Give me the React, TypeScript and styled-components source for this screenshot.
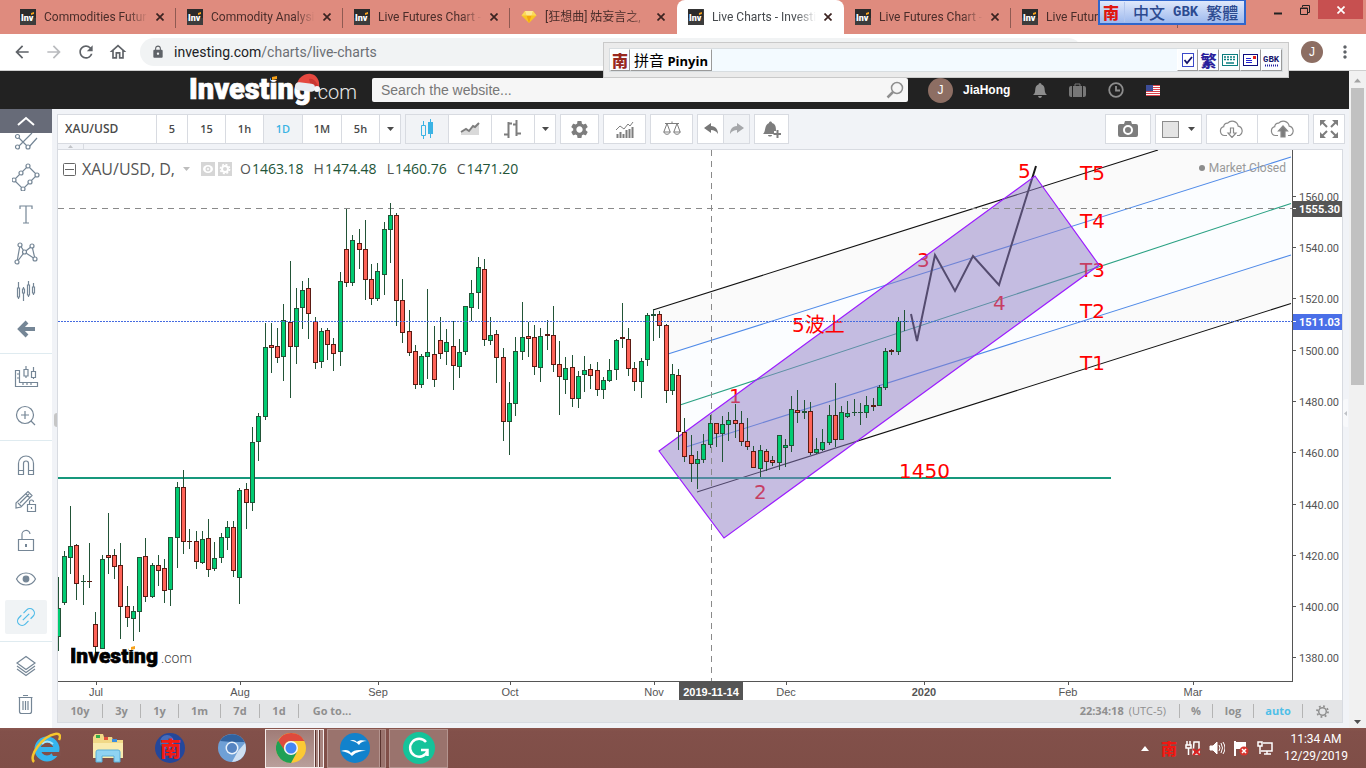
import React from "react";
import styled, { createGlobalStyle, css } from "styled-components";
import {
  MdArrowBack,
  MdArrowForward,
  MdRefresh,
  MdOutlineHome,
  MdLock,
  MdMoreVert,
  MdSettings,
} from "react-icons/md";

const UI = `"Open Sans", "Noto Sans CJK TC", sans-serif`;
const CHROME = `Roboto, "Noto Sans CJK TC", sans-serif`;
const ARIAL = `"Liberation Sans", "Noto Sans CJK TC", sans-serif`;
const CJK = `"Noto Sans CJK TC", "Noto Sans CJK SC", sans-serif`;
const LINE = "#d8dbe1";
const GREY = "#7d7d7d";
const SLATE = "#758696";

const Global = createGlobalStyle`
  * { box-sizing: border-box; }
  html, body { margin: 0; padding: 0; }
  body { font-family: ${ARIAL}; background: #f1f3f7; }
  button { font: inherit; color: inherit; border: 0; background: none; padding: 0; margin: 0; }
  input { font: inherit; color: inherit; border: 0; outline: 0; padding: 0; margin: 0; }
  svg { display: block; }
`;

const Screen = styled.div`
  min-height: 100vh;
  display: flex;
  flex-direction: column;
  position: relative;
  overflow: hidden;
`;

/* ---------- browser frame ---------- */

const TabStrip = styled.div`
  height: 34px;
  background: #df8b7e;
  display: flex;
  padding-left: 9px;
`;

const Tab = styled.div<{ $active?: boolean; $divided?: boolean }>`
  flex: 0 1 167px;
  min-width: 0;
  height: 34px;
  display: flex;
  align-items: center;
  gap: 4px;
  padding: 0 8px 0 11px;
  border-radius: 8px 8px 0 0;
  background: ${(p) => (p.$active ? "#fff" : "transparent")};
  color: ${(p) => (p.$active ? "#45494d" : "#4a2d2a")};
  ${(p) =>
    p.$divided &&
    css`
      background: linear-gradient(#8f5a52, #8f5a52) right 8px / 1px 20px no-repeat;
    `}
`;

const TabTitle = styled.span`
  flex: 1;
  margin-left: 4px;
  white-space: nowrap;
  font: 12px/16px ${CHROME};
  mask-image: linear-gradient(90deg, #000 80%, transparent);
`;

const TabClose = styled.button`
  width: 16px;
  height: 16px;
  display: grid;
  place-items: center;
`;

const WindowControls = styled.div`
  margin-left: auto;
  display: flex;
  padding-right: 3px;
`;

const WindowButton = styled.button<{ $close?: boolean }>`
  width: ${(p) => (p.$close ? 45 : 27)}px;
  height: 19px;
  display: grid;
  place-items: center;
  background: ${(p) => (p.$close ? "#c75050" : "transparent")};
`;

const NavBar = styled.div`
  height: 37px;
  background: #fff;
  border-bottom: 1px solid #cfcfcf;
  display: flex;
  align-items: center;
  gap: 12px;
  padding: 0 11px 0 12px;
`;

const NavButton = styled.button<{ $dim?: boolean }>`
  width: 20px;
  height: 20px;
  display: grid;
  place-items: center;
  font-size: 20px;
  color: ${(p) => (p.$dim ? "#b9bbbe" : "#5f6368")};
`;

const AddressBar = styled.div`
  flex: 1;
  height: 28px;
  margin-right: 207px;
  border-radius: 14px;
  background: #f1f3f4;
  display: flex;
  align-items: center;
  gap: 9px;
  padding-left: 11px;
  font: 14px/20px ${CHROME};
  color: #6b6f74;
  b {
    font-weight: 400;
    color: #202124;
  }
`;

const Avatar = styled.span<{ $size: number }>`
  width: ${(p) => p.$size}px;
  height: ${(p) => p.$size}px;
  border-radius: 50%;
  background: #8d6e63;
  color: #fff;
  display: grid;
  place-items: center;
  font: 12px/12px ${ARIAL};
`;

/* ---------- page ---------- */

const PageRow = styled.div`
  flex: 1;
  display: flex;
`;

const Page = styled.main`
  flex: 1;
  min-width: 0;
  display: flex;
  flex-direction: column;
`;

const ScrollTrack = styled.div`
  width: 17px;
  background: #f1f1f1;
  display: flex;
  flex-direction: column;
  align-items: center;
  padding: 7px 0 4px;
`;

const ScrollThumb = styled.div`
  width: 13px;
  flex: 0 0 297px;
  margin-top: 5px;
  margin-bottom: auto;
  background: #c1c1c1;
`;

const SiteHeader = styled.header`
  height: 38px;
  background: #222;
  display: flex;
  align-items: center;
  padding-left: 190px;
`;

const LogoBox = styled.a`
  width: 182px;
`;

const SearchBox = styled.label`
  flex: 0 1 536px;
  height: 24px;
  background: #f6f6f6;
  border-radius: 2px;
  display: flex;
  align-items: center;
  padding: 0 4px 0 9px;
  input {
    flex: 1;
    min-width: 0;
    background: none;
    font: 14px/20px ${ARIAL};
    &::placeholder {
      color: #777;
      opacity: 1;
    }
  }
`;

const UserArea = styled.div`
  display: flex;
  align-items: center;
  margin-left: 20px;
  gap: 10px;
  color: #fff;
  font: bold 12px/16px ${ARIAL};
`;

const HeaderIcons = styled.div`
  display: flex;
  align-items: center;
  gap: 22px;
  margin-left: 13px;
`;

const Workspace = styled.div`
  flex: 1;
  display: flex;
  background: #f1f3f7;
`;

/* ---------- drawing tools ---------- */

const ToolRail = styled.nav`
  width: 52px;
  background: #fff;
`;

const CollapseButton = styled.button`
  width: 52px;
  height: 24px;
  background: #676b78;
  display: grid;
  place-items: center;
`;

const ToolGroup = styled.div<{ $first?: boolean }>`
  padding: ${(p) => (p.$first ? "0 0 5px" : "5px 0")};
  border-top: ${(p) => (p.$first ? "0" : "1px solid #dfebf0")};
`;

const ToolButton = styled.button<{ $short?: boolean }>`
  width: 52px;
  height: ${(p) => (p.$short ? 25 : 38)}px;
  display: grid;
  place-items: center;
  align-content: ${(p) => (p.$short ? "start" : "center")};
`;

const ToolFace = styled.span<{ $on?: boolean }>`
  width: 42px;
  height: 34px;
  display: grid;
  place-items: center;
  border-radius: 2px;
  background: ${(p) => (p.$on ? "#f0f3f5" : "transparent")};
`;

/* ---------- chart tool bar ---------- */

const ChartColumn = styled.section`
  flex: 1;
  min-width: 0;
  padding: 5px 4px 5px 5px;
`;

const ChartToolbar = styled.div`
  display: flex;
  gap: 4px;
`;

const Group = styled.div<{ $right?: boolean }>`
  display: flex;
  height: 30px;
  border: 1px solid ${LINE};
  background: #fff;
  margin-left: ${(p) => (p.$right ? "auto" : "0")};
  > * + * {
    border-left: 1px solid ${LINE};
  }
`;

const BarButton = styled.button<{ $w: number; $on?: boolean }>`
  width: ${(p) => p.$w}px;
  display: flex;
  align-items: center;
  justify-content: center;
  gap: 9px;
  background: ${(p) => (p.$on ? "#f1f3f6" : "#fff")};
  color: ${(p) => (p.$on ? "#3bb3e4" : "#4a4a4a")};
  font: 600 11px/16px ${UI};
`;

const SymbolInput = styled.input`
  width: 98px;
  padding-left: 7px;
  background: #fff;
  color: #4a4a4a;
  font: 600 12px/16px ${UI};
`;

const FavStrip = styled.div`
  width: 27px;
  height: 5px;
  border: 1px solid ${LINE};
  border-width: 0 1px 0 1px;
  display: grid;
  place-items: center;
`;

const ChartPanel = styled.div`
  position: relative;
  margin-right: 2px;
  border: 1px solid ${LINE};
  background: #fff;
`;

const ChartSvg = styled.svg`
  width: 100%;
  height: auto;
`;

const Legend = styled.div`
  position: absolute;
  left: 5px;
  top: 8px;
  display: flex;
  align-items: center;
  color: #555;
  font: 14px/22px ${UI};
  strong {
    font-weight: 400;
    font-size: 16px;
    margin: 0 8px 0 6px;
  }
`;

const LegendIcons = styled.span`
  display: flex;
  gap: 3px;
  margin: 0 8px 0 11px;
`;

const Quote = styled.span`
  margin-right: 10px;
  white-space: nowrap;
  b {
    font-weight: 400;
    color: #225437;
    margin-left: 1px;
  }
`;

const MarketState = styled.div`
  position: absolute;
  right: 56px;
  top: 9px;
  display: flex;
  align-items: center;
  gap: 4px;
  color: #999;
  font: 12px/18px ${CHROME};
  &::before {
    content: "";
    width: 6px;
    height: 6px;
    border-radius: 50%;
    background: #8c8c8c;
  }
`;

const ChartMark = styled.div`
  position: absolute;
  left: 13px;
  bottom: 50px;
`;

const PanelHandle = styled.div<{ $right?: boolean }>`
  position: absolute;
  ${(p) => (p.$right ? "right: -6px; background: #f8f9fb; top: 249px; height: 28px;" : "left: -4px; background: #c6c6c6; top: 263px; height: 14px;")}
  width: ${(p) => (p.$right ? 5 : 3)}px;
  border-radius: 3px 0 0 3px;
  display: grid;
  place-items: center;
`;

const ChartFooter = styled.div`
  height: 22px;
  background: #e4e5e7;
  display: flex;
  align-items: center;
  color: #8f8f8f;
  font: bold 11px/14px ${UI};
`;

const FootButton = styled.button<{ $w: number; $on?: boolean; $last?: boolean }>`
  width: ${(p) => p.$w}px;
  height: 14px;
  display: grid;
  place-items: center;
  border-right: ${(p) => (p.$last ? "0" : "1px solid #b4b4b4")};
  color: ${(p) => (p.$on ? "#4fbfe8" : "#8f8f8f")};
`;

const FootClock = styled.span`
  margin-left: auto;
  padding-right: 13px;
  height: 14px;
  border-right: 1px solid #b4b4b4;
  span {
    font-weight: 400;
    margin-left: 5px;
  }
`;

/* ---------- input method windows ---------- */

const ImeBar = styled.div`
  position: absolute;
  left: 603px;
  top: 42px;
  width: 686px;
  height: 36px;
  border: 1px solid #c9c9c9;
  background: #ebebeb;
  padding: 5px;
`;

const ImeStrip = styled.div`
  height: 24px;
  display: flex;
  border: 1px solid #d8dde0;
  background: #f3faff;
`;

const ImeButton = styled.button<{ $w: number }>`
  width: ${(p) => p.$w}px;
  height: 22px;
  display: grid;
  place-items: center;
  background: #fbfdff;
  border: 1px solid #fff;
  border-right-color: #9a9a9a;
  border-bottom-color: #9a9a9a;
  white-space: nowrap;
  font: 15px/18px ${CJK};
  color: #000;
  b {
    font: bold 13px/18px ${UI};
  }
`;

const Glyph = styled.span<{ $c: string; $s?: number }>`
  font: 900 ${(p) => p.$s || 16}px/20px ${CJK};
  color: ${(p) => p.$c};
`;

const ImeSpacer = styled.div`
  flex: 1;
`;

const ImeBadge = styled.div`
  position: absolute;
  left: 1098px;
  top: 0;
  width: 148px;
  height: 25px;
  display: flex;
  align-items: center;
  gap: 5px;
  padding-left: 3px;
  border: 2px solid #2f66cc;
  border-top: 1px solid #2f66cc;
  background: linear-gradient(#dfe8fb, #9db9ee);
  color: #2c4a90;
  font: 500 16px/20px ${CJK};
  white-space: nowrap;
`;

const ImeWords = styled.span`
  display: flex;
  gap: 8px;
  padding-left: 8px;
  border-left: 1px solid #b3c6ee;
  b {
    font: bold 14px/20px "Liberation Mono", monospace;
  }
`;

/* ---------- task bar ---------- */

const TaskBar = styled.footer`
  height: 40px;
  background: linear-gradient(#8a574f, #82504a 3px, #7f4e47);
  display: flex;
  align-items: center;
  padding-left: 15px;
`;

const RunningApps = styled.div`
  display: flex;
  gap: 3px;
  margin-left: 2px;
`;

const TaskIcon = styled.button<{ $run?: boolean; $front?: boolean; $stack?: number }>`
  width: ${(p) => (p.$run ? 59 : 62)}px;
  height: 39px;
  display: grid;
  place-items: center;
  ${(p) =>
    p.$run &&
    css`
      border: 1px solid ${p.$front ? "#f5eceb" : "#b4948f"};
      background: ${p.$front ? "linear-gradient(#a07c77, #b99f9b)" : "#9a736d"};
      padding-right: ${(p.$stack || 0) * 4}px;
      box-shadow: ${[
        "none",
        "inset -4px 0 #9a736d, inset -5px 0 #5b342f, inset -6px 0 #b4948f",
        "inset -3px 0 #a88580, inset -4px 0 #5b342f, inset -5px 0 #f5eceb, inset -7px 0 #a88580, inset -8px 0 #5b342f, inset -9px 0 #f5eceb",
      ][p.$stack || 0]};
    `}
`;

const Tray = styled.div`
  margin-left: auto;
  display: flex;
  align-items: center;
  gap: 8px;
`;

const Clock = styled.time`
  width: 85px;
  padding-right: 15px;
  text-align: center;
  color: #fff;
  font: 12px/17px ${CHROME};
`;

/* ---------- data ---------- */

type Candle = [number, number, number, number, number, 0 | 1];

// x, high, body top, body bottom, low, rising
const candles: Candle[] = [
  [58, 577, 608, 637, 651, 1], [64, 551, 556, 603, 605, 1], [70, 506, 546, 558, 574, 1],
  [76, 544, 545, 584, 600, 0], [83, 575, 581, 582, 605, 1], [89, 543, 581, 582, 588, 0],
  [95, 612, 624, 647, 653, 0], [102, 555, 559, 649, 649, 1], [108, 513, 555, 558, 574, 0],
  [114, 549, 555, 567, 579, 0], [120, 543, 565, 607, 639, 0], [127, 586, 606, 618, 627, 0],
  [133, 606, 611, 619, 641, 1], [139, 557, 557, 612, 632, 1], [145, 538, 556, 597, 602, 0],
  [152, 563, 565, 597, 598, 1], [158, 555, 565, 571, 586, 0], [164, 559, 568, 591, 603, 0],
  [170, 537, 537, 590, 606, 1], [177, 482, 487, 538, 568, 1], [183, 470, 487, 542, 554, 0],
  [189, 529, 541, 542, 549, 0], [196, 531, 541, 562, 569, 0], [202, 531, 539, 563, 564, 1],
  [208, 519, 538, 570, 577, 0], [214, 542, 558, 569, 571, 1], [221, 533, 537, 558, 563, 1],
  [227, 521, 527, 538, 550, 1], [233, 521, 527, 571, 577, 0], [239, 488, 490, 578, 604, 1],
  [246, 483, 489, 503, 529, 0], [252, 427, 442, 503, 511, 1], [258, 413, 416, 442, 461, 1],
  [265, 323, 347, 417, 420, 1], [271, 323, 345, 348, 373, 0], [277, 328, 346, 358, 363, 0],
  [283, 304, 320, 357, 381, 1], [290, 261, 322, 347, 398, 0], [296, 288, 308, 347, 364, 1],
  [302, 281, 290, 308, 329, 1], [308, 278, 288, 314, 339, 0], [315, 317, 321, 363, 369, 0],
  [321, 328, 331, 362, 368, 1], [327, 328, 330, 345, 360, 0], [333, 338, 344, 354, 371, 0],
  [340, 272, 281, 352, 366, 1], [346, 209, 249, 283, 287, 0], [352, 235, 240, 283, 286, 1],
  [359, 229, 243, 250, 269, 0], [365, 220, 249, 280, 300, 0], [371, 264, 279, 299, 305, 0],
  [377, 263, 271, 299, 301, 1], [384, 222, 229, 275, 295, 1], [390, 203, 215, 230, 263, 1],
  [396, 213, 215, 301, 326, 0], [402, 279, 300, 333, 343, 0], [409, 310, 331, 353, 356, 0],
  [415, 345, 351, 385, 389, 0], [421, 354, 356, 385, 388, 1], [427, 289, 352, 357, 379, 1],
  [434, 326, 354, 380, 387, 0], [440, 317, 340, 354, 359, 0], [446, 329, 342, 352, 365, 1],
  [453, 321, 346, 366, 390, 0], [459, 339, 352, 367, 378, 1], [465, 306, 306, 352, 355, 1],
  [471, 280, 293, 308, 321, 1], [478, 257, 267, 293, 309, 1], [484, 259, 269, 340, 346, 0],
  [490, 317, 335, 341, 345, 1], [496, 330, 334, 358, 383, 0], [503, 348, 357, 422, 441, 0],
  [509, 382, 403, 422, 455, 1], [515, 337, 351, 404, 416, 1], [522, 302, 337, 352, 360, 1],
  [528, 322, 336, 339, 357, 0], [534, 325, 337, 367, 375, 0], [540, 328, 336, 368, 382, 1],
  [547, 320, 334, 336, 350, 0], [553, 306, 335, 365, 372, 0], [559, 341, 364, 377, 415, 0],
  [565, 357, 368, 380, 394, 1], [572, 355, 367, 399, 407, 0], [578, 371, 376, 399, 408, 1],
  [584, 356, 370, 375, 392, 1], [590, 364, 369, 376, 389, 0], [597, 362, 370, 390, 396, 0],
  [603, 377, 380, 390, 399, 1], [609, 359, 370, 381, 382, 1], [616, 339, 340, 370, 380, 1],
  [622, 303, 337, 339, 348, 0], [628, 328, 339, 369, 376, 0], [634, 362, 368, 382, 391, 0],
  [641, 358, 361, 382, 398, 1], [647, 313, 315, 360, 366, 1], [653, 309, 314, 316, 341, 1],
  [659, 311, 314, 326, 338, 0], [666, 324, 325, 391, 403, 0], [672, 364, 374, 391, 395, 1],
  [678, 369, 375, 432, 450, 0], [684, 418, 432, 457, 462, 0], [691, 435, 455, 464, 482, 0],
  [697, 451, 459, 464, 489, 1], [703, 434, 444, 460, 463, 1], [710, 415, 423, 445, 448, 1],
  [716, 423, 423, 434, 447, 0], [722, 416, 424, 434, 462, 1], [728, 412, 420, 425, 441, 1],
  [735, 404, 420, 424, 438, 0], [741, 411, 423, 442, 446, 0], [747, 418, 441, 447, 450, 0],
  [753, 446, 451, 468, 468, 0], [760, 445, 450, 469, 477, 1], [766, 449, 451, 462, 471, 0],
  [772, 456, 460, 463, 466, 0], [779, 435, 435, 463, 470, 1], [785, 439, 445, 448, 467, 1],
  [791, 396, 409, 446, 452, 1], [797, 390, 410, 413, 423, 0], [804, 400, 411, 413, 419, 1],
  [810, 402, 411, 453, 455, 0], [816, 438, 449, 453, 454, 1], [822, 429, 442, 450, 451, 1],
  [829, 405, 415, 443, 445, 1], [835, 383, 415, 440, 447, 0], [841, 406, 412, 440, 440, 1],
  [847, 401, 413, 417, 418, 1], [854, 399, 412, 413, 416, 1], [860, 403, 412, 413, 425, 1],
  [866, 396, 405, 413, 418, 1], [873, 398, 405, 407, 411, 0], [879, 385, 387, 406, 406, 1],
  [885, 348, 351, 388, 390, 1], [891, 349, 350, 352, 355, 0], [898, 317, 321, 352, 355, 1],
  [904, 310, 321, 322, 331, 1],
];

const prices: [string, number][] = [
  ["1560.00", 196], ["1540.00", 247], ["1520.00", 298], ["1500.00", 350], ["1480.00", 401],
  ["1460.00", 452], ["1440.00", 504], ["1420.00", 555], ["1400.00", 606], ["1380.00", 657],
];

const months: [string, number, boolean?][] = [
  ["Jul", 96], ["Aug", 240], ["Sep", 378], ["Oct", 510], ["Nov", 654],
  ["Dec", 786], ["2020", 924, true], ["Feb", 1068], ["Mar", 1193],
];

/* ---------- drawings ---------- */

const X = ({ c = "#3b2321", s = 8 }: { c?: string; s?: number }) => (
  <svg width={s} height={s} viewBox="0 0 8 8" stroke={c} strokeWidth="1.7">
    <path d="M.5.5l7 7M7.500.5l-7 7" />
  </svg>
);

const Caret = ({ c = "#4a4a4a" }: { c?: string }) => (
  <svg width="7" height="4" viewBox="0 0 7 4"><path d="M0 0h7L3.500 4z" fill={c} /></svg>
);

const Favicon = () => (
  <svg width="16" height="16" viewBox="0 0 16 16">
    <rect width="16" height="16" fill="#2b2b2b" />
    <rect y="9" width="16" height="7" fill="#3c3c3c" />
    <text x="1" y="12" fontFamily="Roboto" fontWeight="900" fontSize="9" fill="#fff">Inv</text>
    <path d="M11 4l3-1v2l-3 1z" fill="#f7a21b" />
  </svg>
);

const Gem = () => (
  <svg width="16" height="16" viewBox="0 0 16 16">
    <path d="M4 2h8l3.500 4.500L8 14 .5 6.500z" fill="#f9c623" />
    <path d="M4 2l1.500 4.500H.5zM12 2l-1.500 4.500h5z" fill="#fbd95b" />
    <path d="M5.500 6.500h5L8 14z" fill="#f3a60d" /><path d="M4 2h8l-1.500 4.500h-5z" fill="#fde894" />
  </svg>
);

const Wordmark = () => (
  <svg width="168" height="36" viewBox="0 0 168 36" role="img" aria-label="Investing.com">
    <text x="-1" y="27" fontFamily="Roboto" fontWeight="900" fontSize="29" fill="#fff" stroke="#fff" strokeWidth=".7">Investing</text>
    <path d="M81 5l6-2v5h-6z" fill="#222" /><path d="M82 5l5-1v3l-5 1z" fill="#f7a21b" />
    <text x="123" y="27" fontFamily="Roboto" fontWeight="300" fontSize="20" fill="#e8e8e8">.com</text>
    <path d="M107 13c1-8 8-12 14-11 6 1 9 7 8 13l-4 3-15-4z" fill="#e5483f" />
    <path d="M119 7c4-1 7 2 9 7l-3 3-4-2z" fill="#c93732" />
    <rect x="105" y="11" width="20" height="8" rx="4" fill="#e9ecf1" transform="rotate(7 115 15)" />
    <circle cx="127" cy="17" r="3" fill="#f6f7f9" />
  </svg>
);

const Wordmark2 = () => (
  <svg width="124" height="26" viewBox="0 0 124 26" role="img" aria-label="Investing.com">
    <text x="-1" y="17" fontFamily="Roboto" fontWeight="900" fontSize="21" fill="#000" stroke="#000" strokeWidth=".6">Investing</text>
    <path d="M58 0h6v4h-6z" fill="#fff" /><path d="M60 1l4-1v3l-4 1z" fill="#f7a21b" />
    <text x="90" y="17" fontFamily="Roboto" fontWeight="300" fontSize="14" fill="#444">.com</text>
  </svg>
);

const Icon = ({ w = 28, h = 28, c = SLATE, children }: { w?: number; h?: number; c?: string; children: React.ReactNode }) => (
  <svg width={w} height={h} viewBox={`0 0 ${w} ${h}`} fill="none" stroke={c} strokeWidth="1.2">{children}</svg>
);

const dots = (pts: number[][], r = 2) => pts.map(([x, y], i) => <circle key={i} cx={x} cy={y} r={r} fill="#fff" />);

const pitchfork = (
  <svg width="28" height="20" viewBox="0 0 28 20" fill="none" stroke={SLATE} strokeWidth="1.200">
    <path d="M6 4l11 11M6 14L20 0M17 14l8-9" />{dots([[5.500, 3.500], [5.500, 14], [16, 14]])}
  </svg>
);
const toolsA: [string, React.ReactNode][] = [
  ["Shapes", <Icon key="a"><path d="M16 5l9 9-14 14L2 19z" transform="translate(0 -2)" />{dots([[16, 3], [25, 12], [18, 19], [11, 26], [2, 17], [9, 10]])}</Icon>],
  ["Text", <Icon key="b"><path d="M8 8V5h12v3M14 5v17M11 22h6" /></Icon>],
  ["Patterns", <Icon key="c"><path d="M5 23L8 6l4.500 7L20 7l3 13-10.500-7L5 23" />{dots([[5, 23], [8, 6], [12.500, 13], [20, 7], [23, 20]])}</Icon>],
  ["Forecast", <Icon key="d"><path d="M6.500 5v6M6.500 20v2M5.500 11h2v9h-2zM11.500 10v2M11.500 16v8M10.500 12h2v4h-2zM16.500 4v4M16.500 18v2M15.500 8h2v10h-2zM21.500 6v4M21.500 16v2M20.500 10h2v6h-2z" /></Icon>],
  ["Arrow", <Icon key="e"><path d="M15 7l-7 7 7 7M9 14h14" strokeWidth="4" /></Icon>],
];
const toolsB: [string, React.ReactNode][] = [
  ["Measure", <Icon key="a"><path d="M3.500 6.500h4v12h18v4h-22zM7 10H5M7 14H5M11 19v2M15 19v2M19 19v2M14 2v3M14 12v2M12 5.500h4v6.500h-4zM21.500 3v4M21.500 13v2M19.500 7.500h4v6h-4z" /></Icon>],
  ["Zoom in", <Icon key="b"><circle cx="13" cy="13" r="8.500" /><path d="M13 9v8M9 13h8M19 19l4 4" /></Icon>],
];
const toolsC: [string, React.ReactNode][] = [
  ["Magnet", <Icon key="a"><path d="M6.500 23.500v-11a7.500 7.500 0 0 1 15 0v11h-5v-11a2.500 2.500 0 0 0-5 0v11zM6.500 19.500h5M16.500 19.500h5" /></Icon>],
  ["Drawing mode", <Icon key="b"><path d="M4 19v-5L16 2.500l4 4L9 18l-5 1zM6 14l3 3M14 5l4 4M8 14L17 5M15.500 15.500h8v7h-8zM17.500 15v-2a2 2 0 0 1 4 0M19.500 18v2" /></Icon>],
  ["Lock", <Icon key="c"><path d="M6.500 12.500h15v11h-15zM10 12V8a4 4 0 0 1 8-1" /><path d="M14 17v3" strokeWidth="2" /></Icon>],
  ["Visibility", <Icon key="d"><path d="M4.500 14c4-8 15-8 19 0-4 8-15 8-19 0z" /><circle cx="14" cy="14" r="2.800" fill={SLATE} /></Icon>],
  ["Link", <Icon key="e" c="#4fbbe8"><g transform="rotate(-45 14 14)"><path d="M13 18.500H8.500a4.500 4.500 0 0 1 0-9H12M15 9.500h4.500a4.500 4.500 0 0 1 0 9H16M9.500 14h9" /></g></Icon>],
];
const toolsD: [string, React.ReactNode][] = [
  ["Layers", <Icon key="a"><path d="M14 4.500l9 6.500-9 6.500L5 11zM5 14l9 6.500 9-6.500M5 17l9 6.500 9-6.500" /></Icon>],
  ["Remove", <Icon key="b"><path d="M7.500 7.500h12v14q0 2-2 2h-8q-2 0-2-2zM6.500 7.500h14M11 5.500h5M11 11v9M13.500 11v9M16 11v9" /></Icon>],
];

const Tools = ({ items, active }: { items: [string, React.ReactNode][]; active?: string }) => (
  <>
    {items.map(([name, icon]) => (
      <ToolButton key={name} aria-label={name}><ToolFace $on={active === name}>{icon}</ToolFace></ToolButton>
    ))}
  </>
);

const Label = ({ x, y, children }: { x: number; y: number; children: string }) => (
  <text x={x} y={y} fill="#f00" fontSize="20" fontFamily={`"DejaVu Sans", ${CJK}`}>{children}</text>
);

const Chart = () => (
  <ChartSvg viewBox="58 150 1284 550" role="img" aria-label="XAU/USD daily chart">
    <clipPath id="plot"><rect x="58" y="150" width="1234" height="531" /></clipPath>
    <g clipPath="url(#plot)">
      <path d="M653 310L1158 150H1291V157L668 354z" fill="#fafafa" />
      <path d="M668 354L1291 157V255L686 447z" fill="#fbfdff" />
      <path d="M686 447L1291 255V303L697 492z" fill="#fafafa" />
      <path d="M653 310L1158 150M697 492L1291 303.500" stroke="#111" strokeWidth="1.100" />
      <path d="M668 354L1291 157M686 447L1291 255" stroke="#4f8ae8" strokeWidth="1.100" />
      <path d="M680 405L1291 203.500" stroke="#2aa183" strokeWidth="1.100" />
      <path d="M58 478H1111" stroke="#16987c" strokeWidth="2" />
      <Label x={1080} y={180}>T5</Label>
      <Label x={1080} y={228}>T4</Label>
      <Label x={1080} y={277}>T3</Label>
      <Label x={1080} y={318}>T2</Label>
      <Label x={1080} y={370}>T1</Label>
      <Label x={1018} y={178}>5</Label>
      <Label x={917} y={267}>3</Label>
      <Label x={993} y={310}>4</Label>
      <Label x={729} y={403}>1</Label>
      <Label x={754} y={499}>2</Label>
      <Label x={899} y={478}>1450</Label>
      <path d="M911 314L917 341L935 255L955 291L973 256L999 285L1036 166" fill="none" stroke="#1a1a1a" strokeWidth="2" />
      <path d="M659 451L1035 176L1099 265L724 538z" fill="#8e7cc3" fillOpacity=".5" stroke="#9c1cff" strokeWidth="1.200" />
      <path d="M58 208.500H1292" stroke="#8a8a8a" strokeDasharray="6 5" />
      <path d="M711.500 150V681" stroke="#8a8a8a" strokeDasharray="6 5" />
      <g shapeRendering="crispEdges">
        {candles.map(([x, hi, top, bot, lo, up]) => {
          const edge = up ? "#225437" : "#5b1a13";
          return (
            <g key={x}>
              <rect x={x} y={hi} width="1" height={lo - hi} fill="#225437" />
              {bot - top > 2 ? (
                <>
                  <rect x={x - 2} y={top} width="5" height={bot - top} fill={edge} />
                  <rect x={x - 1} y={top + 1} width="3" height={bot - top - 2} fill={up ? "#00cb72" : "#ff6358"} />
                </>
              ) : (
                <rect x={x - 2} y={top} width="5" height={bot - top} fill={edge} />
              )}
            </g>
          );
        })}
      </g>
      <Label x={792} y={332}>5波上</Label>
      <path d="M58 321.500H1292" stroke="#456be0" strokeDasharray="2 1" shapeRendering="crispEdges" />
    </g>
    <g shapeRendering="crispEdges" fill="#555">
      <rect x="1292" y="150" width="1" height="532" />
      <rect x="58" y="681" width="1235" height="1" />
      {prices.map(([p, y]) => <rect key={p} x="1293" y={y} width="3" height="1" />)}
      {months.map(([m, x]) => <rect key={m} x={x} y="682" width="1" height="3" />)}
    </g>
    <g fontFamily="Roboto, sans-serif" fontSize="11" fill="#555">
      {prices.map(([p, y]) => <text key={p} x="1299" y={y + 5}>{p}</text>)}
    </g>
    <g fontFamily={ARIAL} fontSize="11" fill="#555" textAnchor="middle">
      {months.map(([m, x, b]) => <text key={m} x={x} y="696" fontWeight={b ? 700 : 400}>{m}</text>)}
    </g>
    <rect x="1293" y="201" width="50" height="16" fill="#555" />
    <rect x="1293" y="314" width="49" height="16" fill="#4a6fe8" />
    <path d="M1293 208.500h3M1293 321.500h3M711.500 682v3" stroke="#fff" />
    <rect x="679" y="682" width="64" height="18" fill="#555" />
    <g fontWeight="700" fontSize="11" fill="#fff">
      <text x="1299" y="213" fontFamily="Roboto, sans-serif">1555.30</text>
      <text x="1299" y="326" fontFamily="Roboto, sans-serif">1511.03</text>
      <text x="711" y="696" fontFamily={ARIAL} textAnchor="middle">2019-11-14</text>
    </g>
  </ChartSvg>
);

const CloudIcon = ({ up }: { up?: boolean }) => (
  <svg width="26" height="18" viewBox="0 0 26 18" fill="none" stroke="#8a8a8a" strokeWidth="1.200">
    <path d="M8 15.500H5.500a4.500 4.500 0 0 1-.8-8.800 3.500 3.500 0 0 1 4-3.500 6 6 0 0 1 10.500 3 5 5 0 0 1 1.300 9.300H18" />
    {up ? <path d="M11 17v-6H8.500L13 6l4.500 5H15v6z" fill="#7d7d7d" /> : <path d="M11.500 8v5H9l4 4.500 4-4.500h-2.500V8z" />}
  </svg>
);

const Toolbar = () => (
  <ChartToolbar>
    <Group>
      <SymbolInput aria-label="Symbol" defaultValue="XAU/USD" />
      <BarButton $w={31}>5</BarButton>
      <BarButton $w={38}>15</BarButton>
      <BarButton $w={38}>1h</BarButton>
      <BarButton $w={39} $on>1D</BarButton>
      <BarButton $w={39}>1M</BarButton>
      <BarButton $w={38}>5h</BarButton>
      <BarButton $w={21} aria-label="More intervals"><Caret /></BarButton>
    </Group>
    <Group>
      <BarButton $w={42} $on aria-label="Candles">
        <svg width="14" height="20" viewBox="0 0 14 20" fill="none" stroke="#3bb3e4">
          <path d="M3.500 2v4M3.500 17v3M1.500 6.500h4v10h-4z" /><path d="M10.500 0v3M10.500 15v4" /><rect x="8.500" y="3.500" width="4" height="11" fill="#3bb3e4" />
        </svg>
      </BarButton>
      <BarButton $w={43} aria-label="Area">
        <svg width="20" height="14" viewBox="0 0 20 14"><path d="M1 10l5-3 3 2 4-5 2 1 4-4v12H1z" fill="#d9d9d9" /><path d="M1 10l5-3 3 2 4-5 2 1 4-4" fill="none" stroke={GREY} strokeWidth="2" /></svg>
      </BarButton>
      <BarButton $w={43} aria-label="Bars">
        <svg width="18" height="18" viewBox="0 0 18 18" fill="none" stroke={GREY} strokeWidth="2"><path d="M4.500 2v16M0 14.500h4M4 3.500h4M12.500 0v16M9 4.500h3M13 13.500h4" /></svg>
      </BarButton>
      <BarButton $w={21} aria-label="More styles"><Caret /></BarButton>
    </Group>
    <Group>
      <BarButton $w={37} aria-label="Settings"><MdSettings size={21} color={GREY} /></BarButton>
    </Group>
    <Group>
      <BarButton $w={41} aria-label="Indicators">
        <svg width="18" height="17" viewBox="0 0 18 17" fill="none" stroke={GREY}><path d="M1.500 17v-4M4.500 17v-6M7.500 17v-4M10.500 17V9M13.500 17V8M16.500 17V6" strokeWidth="2" /><path d="M0 9l4-4 4 3 4-5 2 2 3-4" /></svg>
      </BarButton>
    </Group>
    <Group>
      <BarButton $w={41} aria-label="Compare">
        <svg width="18" height="16" viewBox="0 0 18 16" fill="none" stroke={GREY}><path d="M2 2.500h14M9 .5v2M4 2.500L.8 11h6.400zM14 2.500L10.800 11h6.400zM.8 11c1 3 5.400 3 6.400 0M10.800 11c1 3 5.400 3 6.400 0" /></svg>
      </BarButton>
    </Group>
    <Group>
      <BarButton $w={25} aria-label="Undo"><svg width="14" height="12" viewBox="0 0 14 12"><path d="M0 5l7-5v3c5 0 7 4 7 8-2-3-4-4-7-4v3z" fill="#777" /></svg></BarButton>
      <BarButton $w={26} $on aria-label="Redo"><svg width="14" height="12" viewBox="0 0 14 12"><path d="M14 5L7 0v3C2 3 0 7 0 11c2-3 4-4 7-4v3z" fill="#a5a7aa" /></svg></BarButton>
    </Group>
    <Group>
      <BarButton $w={33} aria-label="Add alert">
        <svg width="18" height="17" viewBox="0 0 18 17"><path d="M0 13c3-2 1-9 6-11 0-2 3-2 3 0 4 1 4 5 4 8h-2v3zM5 14h4c0 2-4 2-4 0z" fill={GREY} /><path d="M14.500 9v8M10.500 13h8" stroke={GREY} strokeWidth="2" /></svg>
      </BarButton>
    </Group>
    <Group $right>
      <BarButton $w={44} aria-label="Snapshot">
        <svg width="20" height="16" viewBox="0 0 20 16"><path d="M2 3h4l1-3h6l1 3h4q2 0 2 2v9q0 2-2 2H2q-2 0-2-2V5q0-2 2-2z" fill={GREY} /><circle cx="10" cy="9" r="4" fill={GREY} stroke="#fff" strokeWidth="2" /></svg>
      </BarButton>
    </Group>
    <Group>
      <BarButton $w={45} aria-label="Layout"><svg width="17" height="17" viewBox="0 0 17 17"><rect x=".5" y=".5" width="16" height="16" fill="#e4e4e4" stroke="#8c8c8c" /></svg><Caret /></BarButton>
    </Group>
    <Group>
      <BarButton $w={50} aria-label="Load"><CloudIcon /></BarButton>
      <BarButton $w={51} aria-label="Save"><CloudIcon up /></BarButton>
    </Group>
    <Group>
      <BarButton $w={30} aria-label="Full screen">
        <svg width="18" height="18" viewBox="0 0 18 18" fill={GREY} stroke={GREY} strokeWidth="2"><path d="M0 0h6L0 6zM18 0v6l-6-6zM0 18v-6l6 6zM18 18h-6l6-6z" stroke="none" /><path d="M2 2l5 5M16 2l-5 5M2 16l5-5M16 16l-5-5" /></svg>
      </BarButton>
    </Group>
  </ChartToolbar>
);

const Globe = () => (
  <svg width="32" height="32" viewBox="0 0 32 32">
    <circle cx="16" cy="16" r="15" fill="#24479b" /><circle cx="13" cy="10" r="7" fill="#5d84cf" opacity=".6" />
    <text x="6" y="24" fontSize="21" fontWeight="900" fontFamily={CJK} fill="#f21b12">南</text>
  </svg>
);

const tabs: [string, boolean?][] = [
  ["Commodities Futur"], ["Commodity Analysi"], ["Live Futures Chart -"],
  ["[狂想曲] 姑妄言之,"], ["Live Charts - Investi", true], ["Live Futures Chart -"], ["Live Futur"],
];

export default function App() {
  return (
    <Screen>
      <Global />
      <TabStrip>
        {tabs.map(([t, on], i) => (
          <Tab key={i} $active={on} $divided={i !== 4 && i !== 3}>
            {i === 3 ? <Gem /> : <Favicon />}
            <TabTitle>{t}</TabTitle>
            <TabClose aria-label="Close tab"><X /></TabClose>
          </Tab>
        ))}
        <WindowControls>
          <WindowButton aria-label="Minimize"><svg width="8" height="10" viewBox="0 0 8 10"><path d="M0 8.500h8" stroke="#222" strokeWidth="2" /></svg></WindowButton>
          <WindowButton aria-label="Restore"><svg width="10" height="10" viewBox="0 0 10 10" fill="none" stroke="#222"><path d="M.5 3v6.500h7V3zM.5 3.500h7M2.500 2V.5h7v7H8" /></svg></WindowButton>
          <WindowButton $close aria-label="Close"><X c="#fff" s={8} /></WindowButton>
        </WindowControls>
      </TabStrip>
      <NavBar>
        <NavButton aria-label="Back"><MdArrowBack /></NavButton>
        <NavButton $dim aria-label="Forward"><MdArrowForward /></NavButton>
        <NavButton aria-label="Reload"><MdRefresh /></NavButton>
        <NavButton aria-label="Home"><MdOutlineHome /></NavButton>
        <AddressBar role="textbox" aria-label="Address">
          <MdLock size={14} color="#5f6368" />
          <span><b>investing.com</b>/charts/live-charts</span>
        </AddressBar>
        <Avatar $size={22}>J</Avatar>
        <NavButton aria-label="Menu"><MdMoreVert /></NavButton>
      </NavBar>

      <PageRow>
        <Page>
          <SiteHeader>
            <LogoBox href="#"><Wordmark /></LogoBox>
            <SearchBox>
              <input aria-label="Search the website" placeholder="Search the website..." />
              <svg width="18" height="18" viewBox="0 0 18 18" fill="none" stroke="#8f8f8f"><circle cx="11" cy="7" r="5.500" strokeWidth="1.500" /><path d="M7 11l-5.500 5.500" strokeWidth="2.500" /></svg>
            </SearchBox>
            <UserArea>
              <Avatar $size={25}>J</Avatar>
              <span>JiaHong</span>
              <HeaderIcons>
                <svg width="14" height="15" viewBox="0 0 14 15" fill="#8d8d8d"><path d="M7 0q1.500 0 1.500 1.500C12 2.500 11.500 6 12 9q.5 2 2 3H0q1.500-1 2-3c.5-3 0-6.500 3.500-7.500Q5.500 0 7 0zM5 13h4q-.5 2-2 2t-2-2z" /></svg>
                <svg width="17" height="14" viewBox="0 0 17 14" fill="#777"><path d="M4 3h9v11H4zM0 5q0-2 2-2h1v11H2q-2 0-2-2zM17 5q0-2-2-2h-1v11h1q2 0 2-2z" /><path d="M6 3V1h5v2" fill="none" stroke="#777" /></svg>
                <svg width="16" height="16" viewBox="0 0 16 16" fill="none" stroke="#8d8d8d" strokeWidth="1.800"><circle cx="8" cy="8" r="6.800" /><path d="M8 4v4.500h4" /></svg>
                <svg width="14" height="11" viewBox="0 0 14 11"><rect width="14" height="11" fill="#fff" /><path d="M0 .5h14M0 2.500h14M0 4.500h14M0 6.500h14M0 8.500h14M0 10.500h14" stroke="#d9434b" /><rect width="7" height="6" fill="#3d4d98" /></svg>
              </HeaderIcons>
            </UserArea>
          </SiteHeader>
          <Workspace>
            <ToolRail aria-label="Drawing tools">
              <CollapseButton aria-label="Scroll up"><svg width="18" height="10" viewBox="0 0 18 10" fill="none" stroke="#fff" strokeWidth="2"><path d="M1 9l8-7 8 7" /></svg></CollapseButton>
              <ToolGroup $first>
                <ToolButton $short aria-label="Pitchfork">{pitchfork}</ToolButton>
                <Tools items={toolsA} />
              </ToolGroup>
              <ToolGroup><Tools items={toolsB} /></ToolGroup>
              <ToolGroup><Tools items={toolsC} active="Link" /></ToolGroup>
              <ToolGroup><Tools items={toolsD} /></ToolGroup>
            </ToolRail>
            <ChartColumn>
              <Toolbar />
              <FavStrip><svg width="5" height="3" viewBox="0 0 5 3"><path d="M0 3h5L2.500 0z" fill="#c2c4c8" /></svg></FavStrip>
              <ChartPanel>
                <Chart />
                <PanelHandle />
                <PanelHandle $right><svg width="3" height="5" viewBox="0 0 3 5"><path d="M3 0v5L0 2.500z" fill="#bfc2c7" /></svg></PanelHandle>
                <Legend>
                  <svg width="13" height="13" viewBox="0 0 13 13" fill="none" stroke="#666"><rect x=".5" y=".5" width="12" height="12" rx="1" /><path d="M2 6.500h9" /></svg>
                  <strong>XAU/USD, D,</strong>
                  <Caret c="#bdbdbd" />
                  <LegendIcons>
                    <svg width="14" height="14" viewBox="0 0 14 14"><rect width="14" height="14" fill="#d6d6d6" /><ellipse cx="7" cy="7" rx="5" ry="4" fill="#fff" /><circle cx="7" cy="7" r="2.500" fill="#d6d6d6" /><circle cx="7" cy="7" r="1" fill="#fff" /></svg>
                    <svg width="14" height="14" viewBox="0 0 14 14"><rect width="14" height="14" fill="#d6d6d6" /><circle cx="7" cy="7" r="3" fill="none" stroke="#fff" strokeWidth="2" /><circle cx="7" cy="7" r="4.600" fill="none" stroke="#fff" strokeWidth="1.500" strokeDasharray="2 1.600" /></svg>
                  </LegendIcons>
                  <Quote>O<b>1463.18</b></Quote>
                  <Quote>H<b>1474.48</b></Quote>
                  <Quote>L<b>1460.76</b></Quote>
                  <Quote>C<b>1471.20</b></Quote>
                </Legend>
                <MarketState>Market Closed</MarketState>
                <ChartMark><Wordmark2 /></ChartMark>
                <ChartFooter>
                  <FootButton $w={45}>10y</FootButton>
                  <FootButton $w={38}>3y</FootButton>
                  <FootButton $w={38}>1y</FootButton>
                  <FootButton $w={42}>1m</FootButton>
                  <FootButton $w={39}>7d</FootButton>
                  <FootButton $w={39}>1d</FootButton>
                  <FootButton $w={66} $last>Go to...</FootButton>
                  <FootClock>22:34:18<span>(UTC-5)</span></FootClock>
                  <FootButton $w={33}>%</FootButton>
                  <FootButton $w={41}>log</FootButton>
                  <FootButton $w={49} $on>auto</FootButton>
                  <FootButton $w={39} $last aria-label="Chart settings">
                    <svg width="13" height="13" viewBox="0 0 13 13" fill="none" stroke="#8f8f8f"><circle cx="6.500" cy="6.500" r="3.800" strokeWidth="1.500" /><circle cx="6.500" cy="6.500" r="5.500" strokeWidth="1.800" strokeDasharray="1.800 2.520" /></svg>
                  </FootButton>
                </ChartFooter>
              </ChartPanel>
            </ChartColumn>
          </Workspace>
        </Page>
        <ScrollTrack>
          <svg width="7" height="5" viewBox="0 0 7 4"><path d="M0 4h7L3.500 0z" fill="#a3a3a3" /></svg>
          <ScrollThumb />
          <Caret c="#505050" />
        </ScrollTrack>
      </PageRow>

      <TaskBar>
        <TaskIcon aria-label="Internet Explorer">
          <svg width="30" height="32" viewBox="0 0 30 32">
            <circle cx="16" cy="17" r="9.500" fill="none" stroke="#35b5ee" strokeWidth="6" /><path d="M8 15h20v5H8z" fill="#35b5ee" /><path d="M20 20h10v4h-8z" fill="#82504a" />
            <path d="M11 12q5-5 11 0" stroke="#a8e6fb" strokeWidth="2" fill="none" />
            <path d="M3 30C-3 24 12 4 24 2c5-1 6 2 4 6" fill="none" stroke="#f6c62d" strokeWidth="2.500" />
          </svg>
        </TaskIcon>
        <TaskIcon aria-label="File Explorer">
          <svg width="32" height="30" viewBox="0 0 32 30">
            <path d="M1 4l2-3h8l1 3h8l1 3h10v18H1z" fill="#f0d887" /><path d="M4 2h4v3H4z" fill="#35ad4b" /><path d="M12 4h4v3h-4z" fill="#e0503c" /><path d="M20 6h5v3h-5z" fill="#3b8fe0" />
            <path d="M1 10h30v15H1z" fill="#f9ebae" /><path d="M4 29V19q0-2 2-2h20q2 0 2 2v10h-6v-6H10v6z" fill="#8fd3f2" stroke="#5aaed8" />
          </svg>
        </TaskIcon>
        <TaskIcon aria-label="NJStar"><Globe /></TaskIcon>
        <TaskIcon aria-label="Chromium">
          <svg width="28" height="28" viewBox="0 0 28 28"><circle cx="14" cy="14" r="14" fill="#6fa0d6" /><path d="M2 7a14 14 0 0 1 24.500 1H14z" fill="#31629f" /><path d="M27 9a14 14 0 0 1-13 19l6-11z" fill="#cfe0f2" /><circle cx="14" cy="14" r="6.500" fill="#eaf2fb" /><circle cx="14" cy="14" r="5" fill="#5584c2" /></svg>
        </TaskIcon>
        <RunningApps>
          <TaskIcon $run $front $stack={2} aria-label="Chrome">
            <svg width="30" height="30" viewBox="0 0 30 30"><circle cx="15" cy="15" r="15" fill="#fbc934" /><path d="M2 8a15 15 0 0 1 26.500 0H15a7 7 0 0 0-6.500 10z" fill="#de4a3d" /><path d="M2 7.500A15 15 0 0 0 15 30l6-11q-6 5-12-1z" fill="#1fa055" /><circle cx="15" cy="15" r="7" fill="#f4f4f4" /><circle cx="15" cy="15" r="5.500" fill="#4486f4" /></svg>
          </TaskIcon>
          <TaskIcon $run $stack={1} aria-label="OpenOffice">
            <svg width="30" height="30" viewBox="0 0 30 30"><circle cx="15" cy="15" r="15" fill="#1282cc" /><path d="M10 8c3-2 5-1 7 1 2-2 5-2 10-1-4 0-6 1-8 4-2-2-4-4-9-4zM1 18c5-2 8-1 10 2 3-3 7-4 15-2-7 0-11 2-14 5-3-3-6-4-11-5z" fill="#fff" /></svg>
          </TaskIcon>
          <TaskIcon $run aria-label="Grammarly">
            <svg width="32" height="32" viewBox="0 0 32 32"><circle cx="16" cy="16" r="16" fill="#15c39a" /><path d="M23 10a9 9 0 1 0 1.500 9M18 18h6.500v6" fill="none" stroke="#fff" strokeWidth="2.500" /></svg>
          </TaskIcon>
        </RunningApps>
        <Tray>
          <svg width="14" height="5" viewBox="0 0 14 5"><path d="M2 5h8L6 0z" fill="#fff" /></svg>
          <Glyph $c="#f01812">南</Glyph>
          <svg width="16" height="16" viewBox="0 0 16 16" fill="none" stroke="#fff" strokeWidth="1.500"><path d="M1 5h5v3H1zM2 5V1M5 5V1M3.500 8v7M9 2h5v12H8z" /><path d="M8 9l7 6M15 9l-7 6" stroke="#e02222" strokeWidth="2" /></svg>
          <svg width="16" height="16" viewBox="0 0 16 16" fill="none" stroke="#fff"><path d="M1 6h3l4-4v12l-4-4H1z" fill="#fff" /><path d="M10 5q2 3 0 6M12 3q3 5 0 10M14 2q4 6 0 12" /></svg>
          <svg width="16" height="16" viewBox="0 0 16 16"><path d="M2 1v15" stroke="#fff" strokeWidth="2" /><path d="M2 2h11v7H2z" fill="#fff" /><circle cx="11" cy="11" r="4.500" fill="#d8352e" /><path d="M9 9l4 4M13 9l-4 4" stroke="#fff" strokeWidth="1.500" /></svg>
          <svg width="16" height="16" viewBox="0 0 16 16" fill="none" stroke="#fff" strokeWidth="1.500"><path d="M6 3h9v8H4M1 2h4v4H1zM3 6v8M7 14h7M10 11v3" /></svg>
          <Clock>11:34 AM<br />12/29/2019</Clock>
        </Tray>
      </TaskBar>

      <ImeBar>
        <ImeStrip>
          <ImeButton $w={20} aria-label="NJStar"><Glyph $c="#98281f">南</Glyph></ImeButton>
          <ImeButton $w={82}><span>拼音 <b>Pinyin</b></span></ImeButton>
          <ImeSpacer />
          <ImeButton $w={21} aria-label="Options"><svg width="12" height="14" viewBox="0 0 12 14" fill="none"><rect x=".5" y=".5" width="11" height="13" stroke="#3a49c9" fill="#fff" /><path d="M2.500 7l2.500 3 5-6" stroke="#14146b" strokeWidth="1.800" /></svg></ImeButton>
          <ImeButton $w={21} aria-label="Traditional"><Glyph $c="#2a1f9c">繁</Glyph></ImeButton>
          <ImeButton $w={21} aria-label="Keyboard"><svg width="16" height="12" viewBox="0 0 16 12"><rect x=".5" y=".5" width="15" height="11" fill="#fff" stroke="#0a7d80" /><path d="M2 3h12M2 5.500h12" stroke="#0a7d80" strokeWidth="1.500" strokeDasharray="2 1" /><path d="M4 9h8" stroke="#0a7d80" strokeWidth="1.500" /></svg></ImeButton>
          <ImeButton $w={21} aria-label="Mail"><svg width="15" height="12" viewBox="0 0 15 12"><rect x=".5" y=".5" width="14" height="11" fill="#fff" stroke="#0c0c80" /><path d="M3 4.500h5M3 6.500h6M3 8.500h6" stroke="#2222d0" /><path d="M10 2h3v3h-3z" fill="#e01c1c" /></svg></ImeButton>
          <ImeButton $w={21} aria-label="Encoding"><svg width="17" height="18" viewBox="0 0 17 18"><text x="0" y="11" fontSize="9" fontWeight="700" fontFamily="Liberation Mono" fill="#14146b">GBK</text><path d="M2 14.500h13" stroke="#2222a0" strokeDasharray="1 1" strokeWidth="2" /></svg></ImeButton>
        </ImeStrip>
      </ImeBar>
      <ImeBadge>
        <Glyph $c="#e01810">南</Glyph>
        <ImeWords><span>中文</span><b>GBK</b><span>繁體</span></ImeWords>
      </ImeBadge>
    </Screen>
  );
}
